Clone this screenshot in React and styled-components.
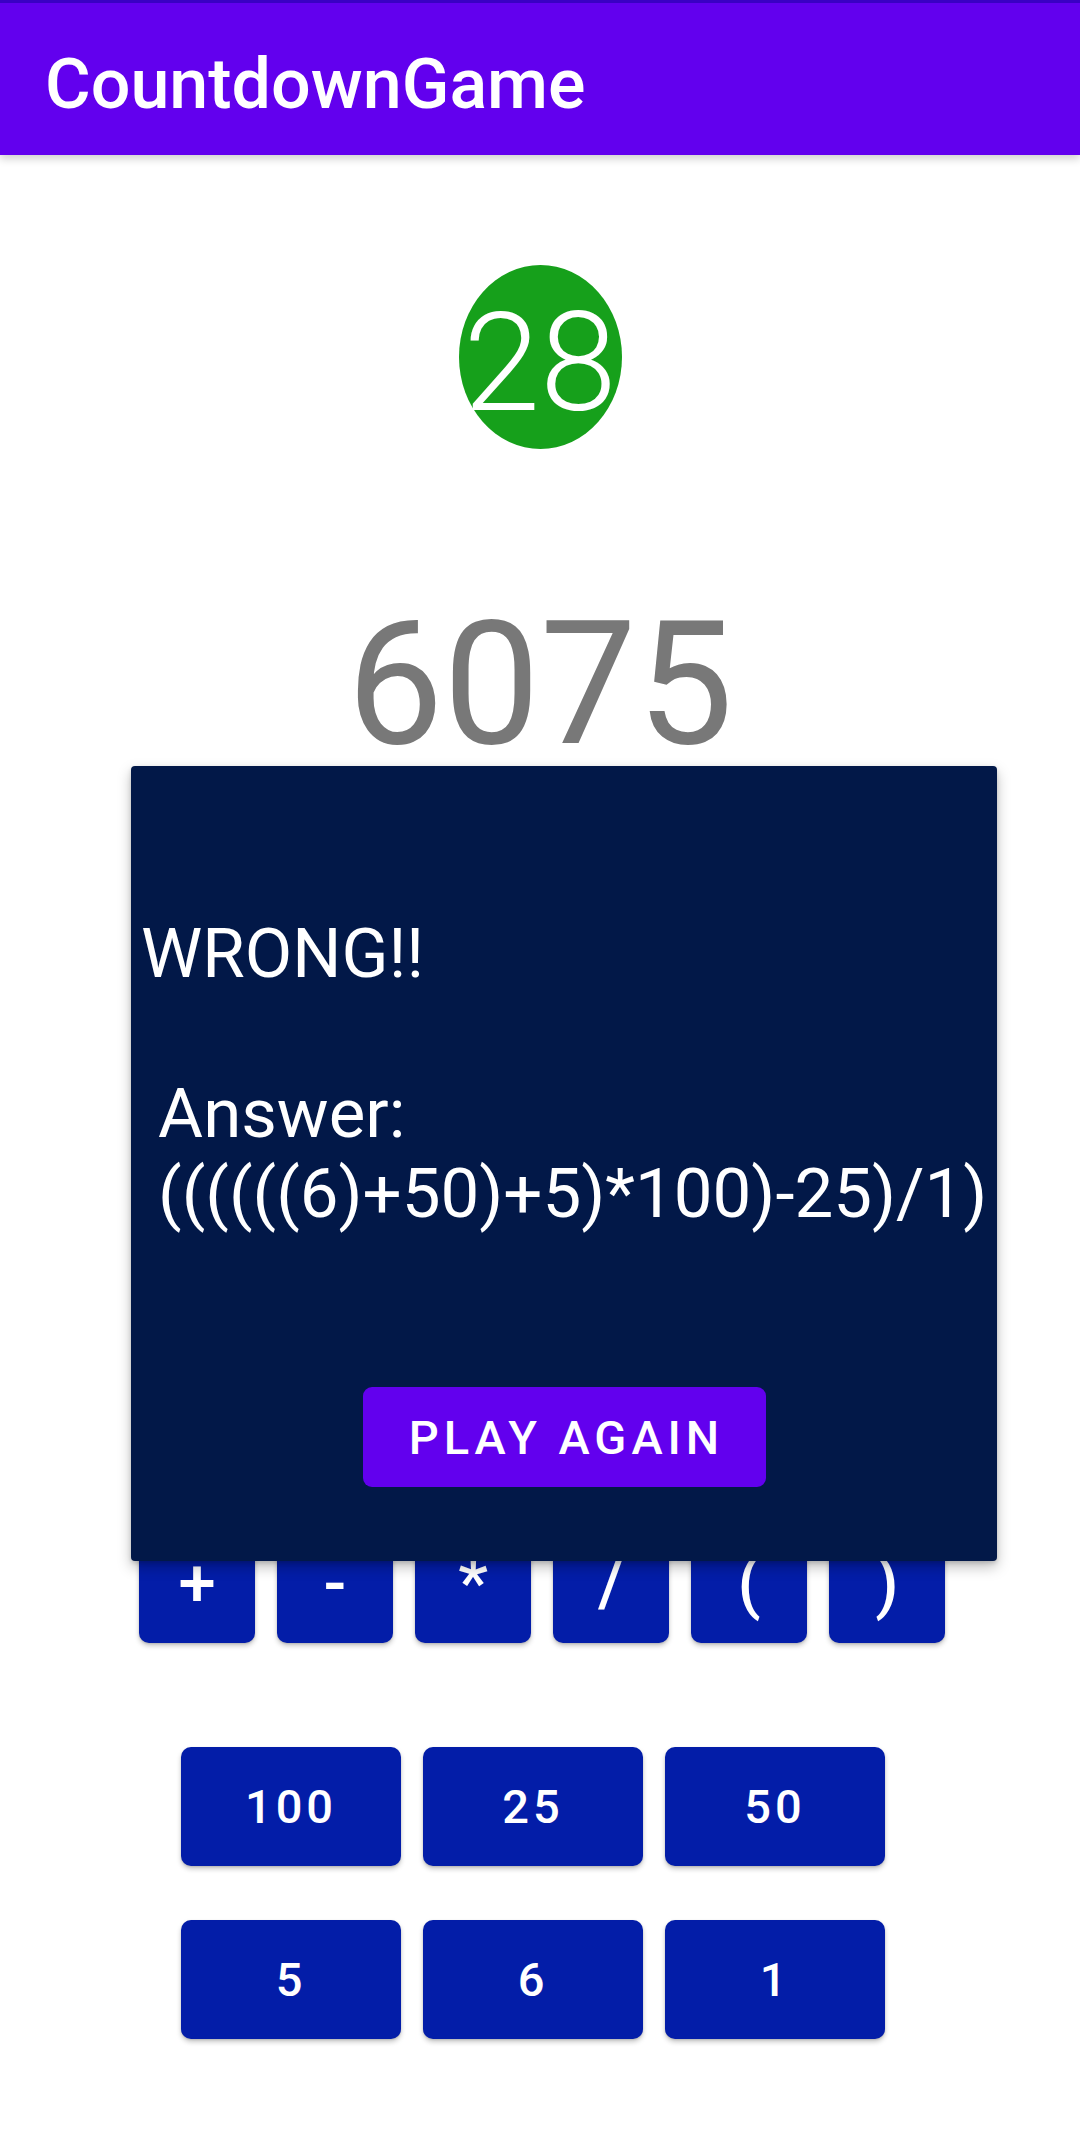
import React from "react";
import styled, { createGlobalStyle } from "styled-components";

const Global = createGlobalStyle`
  html, body { margin: 0; padding: 0; background: #ffffff; }
  body { font-family: Roboto, "Liberation Sans", sans-serif; }
  * { box-sizing: border-box; }
`;

const Screen = styled.div`
  position: relative;
  width: 1080px;
  height: 2130px;
  background: #ffffff;
  overflow: hidden;
`;

const AppBar = styled.header`
  position: relative;
  z-index: 2;
  height: 155px;
  background: #6200ee;
  border-top: 3px solid #3a00c4;
  box-shadow: 0 4px 8px rgba(0, 0, 0, 0.18);
  padding: 40px 0 0 45px;
`;

const Title = styled.h1`
  margin: 0;
  font-family: Roboto, "Liberation Sans", sans-serif;
  font-weight: 500;
  font-size: 70px;
  line-height: 82px;
  color: #ffffff;
  letter-spacing: 0;
`;

const Main = styled.main`
  display: flex;
  flex-direction: column;
  align-items: center;
`;

const Timer = styled.div`
  margin-top: 110px;
  width: 163px;
  height: 184px;
  border-radius: 50%;
  background: #16a01b;
  display: flex;
  align-items: center;
  justify-content: center;
`;

const TimerText = styled.span`
  font-family: Roboto, "Liberation Sans", sans-serif;
  font-weight: 300;
  font-size: 138px;
  line-height: 1;
  color: #ffffff;
  white-space: nowrap;
  margin-top: 12px;
`;

const Target = styled.div`
  margin-top: 134px;
  font-family: Roboto, "Liberation Sans", sans-serif;
  font-weight: 400;
  font-size: 172px;
  line-height: 202px;
  height: 202px;
  color: #787878;
`;

const OpRow = styled.div`
  margin-top: 737px;
  margin-left: 4px;
  display: flex;
  gap: 22px;
`;

const KeyButton = styled.button`
  border: none;
  padding: 0;
  margin: 0;
  width: ${(p) => (p.$wide ? "220px" : "116px")};
  height: ${(p) => (p.$wide ? "119px" : "121px")};
  border-radius: 10px;
  background: #031da8;
  color: #ffffff;
  font-family: Roboto, "Liberation Sans", sans-serif;
  font-weight: 500;
  font-size: ${(p) => (p.$wide ? "47px" : "67px")};
  letter-spacing: ${(p) => (p.$wide ? "4px" : "0")};
  display: flex;
  align-items: center;
  justify-content: center;
  box-shadow: 0 3px 5px rgba(0, 0, 0, 0.22), 0 1px 2px rgba(0, 0, 0, 0.12);
`;

const NumberGrid = styled.div`
  margin-top: 104px;
  margin-right: 14px;
  display: grid;
  grid-template-columns: repeat(3, 220px);
  column-gap: 22px;
  row-gap: 54px;
`;

const Dialog = styled.section`
  position: absolute;
  z-index: 3;
  left: 131px;
  top: 766px;
  width: 866px;
  height: 795px;
  background: #021848;
  border-radius: 4px;
  box-shadow: 0 6px 14px rgba(0, 0, 0, 0.25), 0 2px 4px rgba(0, 0, 0, 0.15);
  display: flex;
  flex-direction: column;
  padding: 148px 0 0 10px;
`;

const Message = styled.div`
  font-family: Roboto, "Liberation Sans", sans-serif;
  font-weight: 400;
  font-size: 69px;
  line-height: 80px;
  color: #ffffff;
  white-space: pre;
`;

const PlayAgain = styled.button`
  align-self: center;
  margin: 153px 0 0 -10px;
  width: 403px;
  height: 100px;
  border: none;
  border-radius: 9px;
  background: #6200ee;
  color: #ffffff;
  font-family: Roboto, "Liberation Sans", sans-serif;
  font-weight: 500;
  font-size: 47px;
  letter-spacing: 5px;
  padding: 0 0 0 5px;
  display: flex;
  align-items: center;
  justify-content: center;
`;

const ops = ["+", "-", "*", "/", "(", ")"];
const numbers = ["100", "25", "50", "5", "6", "1"];

export default function App() {
  return (
    <>
      <Global />
      <Screen>
        <AppBar>
          <Title>CountdownGame</Title>
        </AppBar>
        <Main>
          <Timer>
            <TimerText>28</TimerText>
          </Timer>
          <Target>6075</Target>
          <OpRow>
            {ops.map((o) => (
              <KeyButton key={o}>{o}</KeyButton>
            ))}
          </OpRow>
          <NumberGrid>
            {numbers.map((n) => (
              <KeyButton key={n} $wide>
                {n}
              </KeyButton>
            ))}
          </NumberGrid>
        </Main>
        <Dialog>
          <Message>{"WRONG!!\n\n Answer:\n ((((((6)+50)+5)*100)-25)/1)"}</Message>
          <PlayAgain>PLAY AGAIN</PlayAgain>
        </Dialog>
      </Screen>
    </>
  );
}
